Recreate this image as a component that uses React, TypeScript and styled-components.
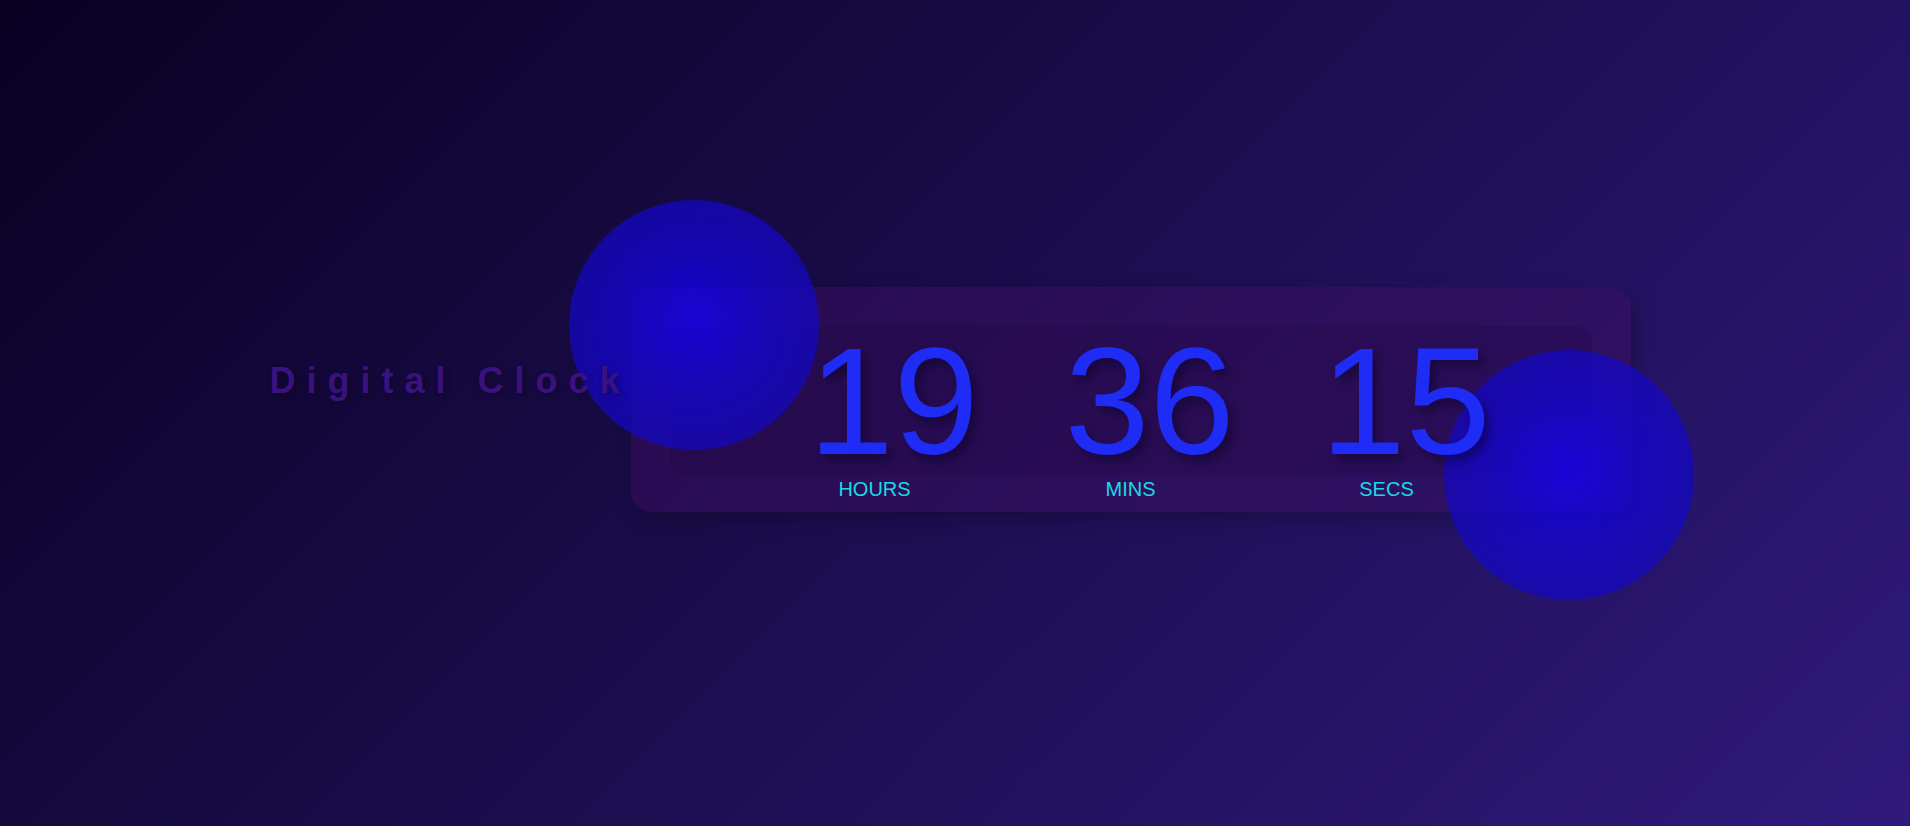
import React from 'react';
import styled, { createGlobalStyle } from 'styled-components';

const GlobalStyle = createGlobalStyle`
  * {
    box-sizing: border-box;
  }
  html,
  body {
    margin: 0;
    padding: 0;
    height: 100%;
  }
  body {
    font-family: 'Liberation Sans', Arial, sans-serif;
    background: linear-gradient(135deg, #090122 0%, #2f1a7c 100%);
    overflow: hidden;
  }
`;

const units = [
  { value: '19', label: 'HOURS' },
  { value: '36', label: 'MINS' },
  { value: '15', label: 'SECS' }
];

const App = () => {
  return (
    <>
      <GlobalStyle />
      <Page>
        <Title>Digital Clock</Title>
        <ClockWrap>
          <Card>
            <Face>
              <Columns>
                {units.map(item => (
                  <Digits key={item.label}>{item.value}</Digits>
                ))}
              </Columns>
            </Face>
            <LabelRow>
              {units.map(item => (
                <Label key={item.label}>{item.label}</Label>
              ))}
            </LabelRow>
          </Card>
          {/* glow bubbles sit over the glass card, under the numbers */}
          <Bubble $left={-62} $top={-87} />
          <Bubble $left={813} $top={63} />
        </ClockWrap>
      </Page>
    </>
  );
};

export default App;

const Page = styled.main`
  height: 100vh;
  display: flex;
  align-items: center;
  justify-content: center;
  padding: 0 10px 27px 0;
`;

const Title = styled.h1`
  position: relative;
  z-index: 2;
  margin: 0 0 37px;
  font-size: 36px;
  font-weight: 700;
  letter-spacing: 11px;
  color: #3a127f;
  text-shadow: 2px 3px 6px rgba(0, 0, 0, 0.3);
  white-space: nowrap;
`;

const ClockWrap = styled.section`
  position: relative;
  width: 1000px;
  height: 225px;
`;

const Bubble = styled.div<{ $left: number; $top: number }>`
  position: absolute;
  left: ${p => p.$left}px;
  top: ${p => p.$top}px;
  width: 250px;
  height: 250px;
  border-radius: 50%;
  background: radial-gradient(
    circle at 50% 48%,
    #1400ff 0%,
    #1405d2 42%,
    #150aab 100%
  );
  opacity: 0.75;
`;

const Card = styled.div`
  width: 100%;
  height: 100%;
  padding: 39px 39px 0;
  border-radius: 20px;
  background: rgba(58, 14, 96, 0.5);
  box-shadow: 6px 8px 20px rgba(0, 0, 0, 0.22);
`;

const Face = styled.div`
  border-radius: 16px;
  background: rgba(28, 6, 58, 0.2);
`;

const Columns = styled.div`
  position: relative;
  z-index: 1;
  display: grid;
  grid-template-columns: repeat(3, 256px);
  justify-content: center;
`;

const LabelRow = styled(Columns)`
  margin-top: 3px;
`;

const Digits = styled.span`
  display: block;
  padding-left: 38px;
  text-align: center;
  font-size: 153px;
  line-height: 149px;
  color: #1e2cf5;
  text-shadow: 5px 6px 10px rgba(5, 0, 30, 0.45);
`;

const Label = styled.span`
  text-align: center;
  font-size: 20px;
  line-height: 23px;
  color: #18dae6;
`;
